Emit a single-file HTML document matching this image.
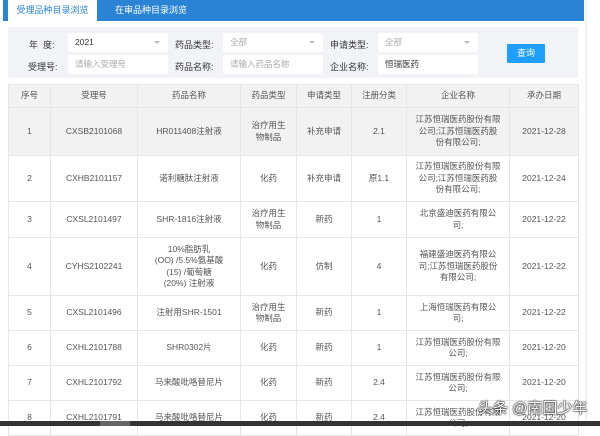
<!DOCTYPE html>
<html><head><meta charset="utf-8"><style>
*{margin:0;padding:0;box-sizing:border-box}
body{width:600px;height:426px;overflow:hidden;background:#fff;font-family:"Liberation Sans","Noto Sans CJK SC",sans-serif;font-size:8.5px;color:#555;position:relative}
.bar{position:absolute;left:3px;top:0;width:581px;height:21px;background:#2a83d5}
.tab{position:absolute;top:0;height:21px;line-height:21px;font-size:9px;color:#fff}
.tab.a{left:8px;width:89px;background:#fff;color:#2a83d5;text-align:center}
.filt{position:absolute;left:8px;top:27px;width:570px;height:51px;background:#f2f3f6}
.lb{position:absolute;font-size:9px;color:#333}
.in{position:absolute;width:100px;height:19px;background:#fff;border-radius:2px;font-size:8.5px;line-height:19px;padding-left:7px;color:#333}
.in.p{color:#aaa}
.in .ar{position:absolute;right:8px;top:8px;border-left:3.5px solid transparent;border-right:3.5px solid transparent;border-top:3.5px solid #bbb}
.btn{position:absolute;width:38px;height:19px;background:#1e9fff;color:#fff;font-size:9px;text-align:center;line-height:19px;border-radius:1px}
table{position:absolute;left:8px;top:84px;width:570px;border-collapse:collapse;table-layout:fixed}
td,th{border:1px solid #e6e6e6;text-align:center;font-weight:normal;font-size:8.5px;line-height:11.5px;padding:0;color:#555;white-space:nowrap}
th{background:#f2f2f2;height:23px}
tr.g td{background:#f2f2f2}
.sb{position:absolute;left:0;top:421px;width:600px;height:5px;background:#333}
.sb i{position:absolute;left:100px;top:0;width:30px;height:5px;background:#666}
.vl{position:absolute;left:585px;top:0;width:2px;height:421px;background:#eef1f5}
.wm{position:absolute;left:478px;top:397px;font-size:15px;color:#fff;text-shadow:0 0 2px #333,0 0 1px #000,0 0 1px #000}
</style></head><body>
<div class="bar"></div>
<div class="tab a">受理品种目录浏览</div>
<div class="tab" style="left:115px">在审品种目录浏览</div>
<div class="vl"></div>
<div class="filt"></div>
<div class="lb" style="left:29px;top:38px">年&nbsp;&nbsp;度:</div>
<div class="in" style="left:68px;top:33px">2021<span class="ar"></span></div>
<div class="lb" style="left:175px;top:38px">药品类型:</div>
<div class="in p" style="left:223px;top:33px">全部<span class="ar"></span></div>
<div class="lb" style="left:330px;top:38px">申请类型:</div>
<div class="in p" style="left:378px;top:33px">全部<span class="ar"></span></div>
<div class="lb" style="left:28px;top:60px">受理号:</div>
<div class="in p" style="left:68px;top:55px">请输入受理号</div>
<div class="lb" style="left:175px;top:60px">药品名称:</div>
<div class="in p" style="left:223px;top:55px">请输入药品名称</div>
<div class="lb" style="left:330px;top:60px">企业名称:</div>
<div class="in" style="left:378px;top:55px">恒瑞医药</div>
<div class="btn" style="left:507px;top:44px">查询</div>
<table>
<colgroup><col style="width:42px"><col style="width:87px"><col style="width:103px"><col style="width:56px"><col style="width:55px"><col style="width:55px"><col style="width:103px"><col style="width:69px"></colgroup>
<tr><th>序号</th><th>受理号</th><th>药品名称</th><th>药品类型</th><th>申请类型</th><th>注册分类</th><th>企业名称</th><th>承办日期</th></tr>
<tr class="g" style="height:48px"><td>1</td><td>CXSB2101068</td><td>HR011408注射液</td><td>治疗用生<br>物制品</td><td>补充申请</td><td>2.1</td><td>江苏恒瑞医药股份有限<br>公司;江苏恒瑞医药股<br>份有限公司;</td><td>2021-12-28</td></tr>
<tr style="height:46px"><td>2</td><td>CXHB2101157</td><td>诺利糖肽注射液</td><td>化药</td><td>补充申请</td><td>原1.1</td><td>江苏恒瑞医药股份有限<br>公司;江苏恒瑞医药股<br>份有限公司;</td><td>2021-12-24</td></tr>
<tr style="height:36px"><td>3</td><td>CXSL2101497</td><td>SHR-1816注射液</td><td>治疗用生<br>物制品</td><td>新药</td><td>1</td><td>北京盛迪医药有限公<br>司;</td><td>2021-12-22</td></tr>
<tr style="height:58px"><td>4</td><td>CYHS2102241</td><td>10%脂肪乳<br>(OO) /5.5%氨基酸<br>(15) /葡萄糖<br>(20%) 注射液</td><td>化药</td><td>仿制</td><td>4</td><td>福建盛迪医药有限公<br>司;江苏恒瑞医药股份<br>有限公司;</td><td>2021-12-22</td></tr>
<tr style="height:35px"><td>5</td><td>CXSL2101496</td><td>注射用SHR-1501</td><td>治疗用生<br>物制品</td><td>新药</td><td>1</td><td>上海恒瑞医药有限公<br>司;</td><td>2021-12-22</td></tr>
<tr style="height:35px"><td>6</td><td>CXHL2101788</td><td>SHR0302片</td><td>化药</td><td>新药</td><td>1</td><td>江苏恒瑞医药股份有限<br>公司;</td><td>2021-12-20</td></tr>
<tr style="height:35px"><td>7</td><td>CXHL2101792</td><td>马来酸吡咯替尼片</td><td>化药</td><td>新药</td><td>2.4</td><td>江苏恒瑞医药股份有限<br>公司;</td><td>2021-12-20</td></tr>
<tr style="height:35px"><td>8</td><td>CXHL2101791</td><td>马来酸吡咯替尼片</td><td>化药</td><td>新药</td><td>2.4</td><td>江苏恒瑞医药股份有限<br>公司;</td><td>2021-12-20</td></tr>
</table>
<div class="sb"><i></i></div>
<div class="wm">头条 @南国少年</div>
</body></html>
